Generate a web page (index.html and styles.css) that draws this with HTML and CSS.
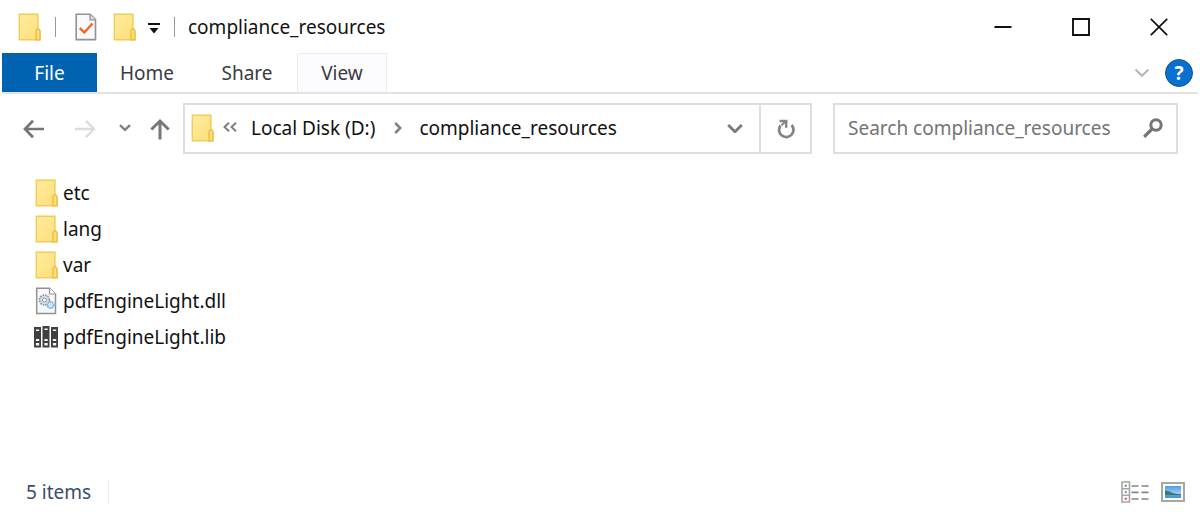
FILE: index.html
```html
<!DOCTYPE html>
<html lang="en">
<head>
<meta charset="utf-8">
<meta name="viewport" content="width=device-width, initial-scale=1">
<title>compliance_resources</title>
<link rel="stylesheet" href="styles.css">
</head>
<body>
<svg class="defs" aria-hidden="true">
  <defs>
    <linearGradient id="fold" x1="0" y1="0" x2="1" y2="1"><stop offset="0" stop-color="#ffec9f"/><stop offset="1" stop-color="#fddd78"/></linearGradient>
    <linearGradient id="sky" x1="0" y1="0" x2="0" y2="1"><stop offset="0" stop-color="#4f9be6"/><stop offset="1" stop-color="#d5ecfa"/></linearGradient>
    <symbol id="folder" viewBox="0 0 24 28">
      <path d="M2.3 1.2H21V16.2L23 18.5V26.8H2.3Z" fill="url(#fold)" stroke="#f0cd57" stroke-width="1.4"/>
      <path d="M19 26.8V17.5Q21 14 23 17.5V26.8Z" fill="#fbdc75" stroke="#e7bf46" stroke-width="1.3"/>
    </symbol>
  </defs>
</svg>
<div class="window">
  <header class="titlebar">
    <svg class="folder" aria-hidden="true"><use href="#folder"/></svg>
    <span class="rule"></span>
    <button class="quick" aria-label="Properties">
      <svg width="22" height="28" viewBox="0 0 22 28"><path d="M1.2 1.2H15.2L20.5 6.5V26.6H1.2Z" fill="#f8f9fb" stroke="#929292" stroke-width="1.6"/><path d="M15 1.2V6.8H20.5" fill="#ddd" stroke="#929292" stroke-width="1.3"/><path d="M4.8 15.2L9.3 19.5L17.5 10.5" fill="none" stroke="#f4662b" stroke-width="2.5"/></svg>
    </button>
    <button class="quick" aria-label="New folder"><svg class="folder"><use href="#folder"/></svg></button>
    <button class="quick more" aria-label="Customize toolbar">
      <svg width="12" height="12" viewBox="0 0 12 12"><path d="M0 1H12" stroke="#111" stroke-width="2"/><path d="M1.5 5H10.5L6 10.5Z" fill="#111"/></svg>
    </button>
    <span class="rule"></span>
    <h1 class="title">compliance_resources</h1>
    <div class="controls">
      <button class="control" aria-label="Minimize"><svg width="18" height="18" viewBox="0 0 18 18"><path d="M0.5 9H17.5" stroke="#111" stroke-width="2"/></svg></button>
      <button class="control" aria-label="Maximize"><svg width="18" height="18" viewBox="0 0 18 18"><path d="M1 1H17V17H1Z" fill="none" stroke="#111" stroke-width="1.9"/></svg></button>
      <button class="control" aria-label="Close"><svg width="18" height="18" viewBox="0 0 18 18"><path d="M0.8 0.8L17.2 17.2M17.2 0.8L0.8 17.2" stroke="#111" stroke-width="1.7"/></svg></button>
    </div>
  </header>

  <nav class="ribbon">
    <button class="tab file">File</button>
    <button class="tab">Home</button>
    <button class="tab">Share</button>
    <button class="tab hover">View</button>
    <button class="expand" aria-label="Expand the ribbon"><svg width="16" height="10" viewBox="0 0 16 10"><path d="M1.5 1.5L8 7.8L14.5 1.5" fill="none" stroke="#b5b5b5" stroke-width="2"/></svg></button>
    <button class="help" aria-label="Help">?</button>
  </nav>

  <div class="navbar">
    <div class="arrows">
      <button class="arrow" aria-label="Back"><svg width="22" height="20" viewBox="0 0 22 20"><path d="M22 10H3M11 1.8L3 10L11 18.2" fill="none" stroke="#757575" stroke-width="2.7"/></svg></button>
      <button class="arrow forward" aria-label="Forward" disabled><svg width="22" height="20" viewBox="0 0 22 20"><path d="M1 10H20M12 1.8L20 10L12 18.2" fill="none" stroke="#dcdcdc" stroke-width="2.4"/></svg></button>
      <button class="arrow recent" aria-label="Recent locations"><svg width="12" height="10" viewBox="0 0 12 10"><path d="M1 1.2L6 5.8L11 1.2" fill="none" stroke="#808080" stroke-width="2.5"/></svg></button>
      <button class="arrow" aria-label="Up"><svg width="20" height="22" viewBox="0 0 20 22"><path d="M10 21.5V3.5M1.3 11.5L10 3L18.7 11.5" fill="none" stroke="#777" stroke-width="3"/></svg></button>
    </div>
    <div class="address">
      <svg class="folder" aria-hidden="true"><use href="#folder"/></svg>
      <button class="overflow" aria-label="Parent folders"><svg width="14" height="12" viewBox="0 0 14 12"><path d="M6 0.8L1.5 5L6 9.2M13 0.8L8.5 5L13 9.2" fill="none" stroke="#7c7c7c" stroke-width="1.9"/></svg></button>
      <button class="crumb">Local Disk (D:)</button>
      <svg class="next" width="8" height="12" viewBox="0 0 8 12" aria-hidden="true"><path d="M1.2 1L6.2 6L1.2 11" fill="none" stroke="#808080" stroke-width="2.5"/></svg>
      <button class="crumb">compliance_resources</button>
      <button class="history" aria-label="Previous locations"><svg width="16" height="11" viewBox="0 0 16 11"><path d="M1.2 3L8 9.7L14.8 3" fill="none" stroke="#7c7c7c" stroke-width="3"/></svg></button>
      <button class="refresh" aria-label="Refresh"><svg width="18" height="20" viewBox="0 0 18 20"><path d="M14.6 6A7.2 7.2 0 1 1 3.6 6.4" fill="none" stroke="#858585" stroke-width="2.8"/><path d="M2.5 2H9.2V8.7" fill="none" stroke="#858585" stroke-width="2.5"/><path d="M4.5 6.3L9 2" stroke="#858585" stroke-width="2"/></svg></button>
    </div>
    <label class="search">
      <input type="search" placeholder="Search compliance_resources" aria-label="Search compliance_resources">
      <svg width="20" height="20" viewBox="0 0 20 20" aria-hidden="true"><circle cx="13" cy="7" r="5.2" fill="none" stroke="#757575" stroke-width="3"/><path d="M9 11L1.2 18.8" stroke="#757575" stroke-width="3.2"/></svg>
    </label>
  </div>

  <main class="content">
    <ul class="files">
      <li class="item"><svg class="folder" aria-hidden="true"><use href="#folder"/></svg>etc</li>
      <li class="item"><svg class="folder" aria-hidden="true"><use href="#folder"/></svg>lang</li>
      <li class="item"><svg class="folder" aria-hidden="true"><use href="#folder"/></svg>var</li>
      <li class="item">
        <svg width="24" height="28" viewBox="0 0 24 28" aria-hidden="true"><path d="M2.7 1.2H15.5L21.5 7V26.6H2.7Z" fill="#f8f8f8" stroke="#939393" stroke-width="1.5"/><path d="M15.5 1.2V7H21.5" fill="#fff" stroke="#939393" stroke-width="1.2"/><circle cx="10.5" cy="13" r="5" fill="#d7e0e6" stroke="#8a969c" stroke-width="1.7" stroke-dasharray="1.6 1"/><circle cx="10.5" cy="13" r="2" fill="#f8f8f8" stroke="#8a969c"/><circle cx="16.5" cy="18" r="3.2" fill="#cde8fa" stroke="#7db5dc" stroke-width="1.7" stroke-dasharray="1.7 .6"/></svg>pdfEngineLight.dll</li>
      <li class="item">
        <svg width="24" height="22" viewBox="0 0 25.4 22" preserveAspectRatio="none" aria-hidden="true"><path d="M0 1H7.4V21.5H0ZM9 0H16.4V21.5H9ZM18 1H25.4V21.5H18Z" fill="#3f3f3f"/><path d="M2 3.5H5.5V5H2ZM11 2.5H14.5V4H11ZM20 3.5H23.5V5H20ZM2 13H5.5V15H2ZM11 13H14.5V15H11ZM20 13H23.5V15H20ZM2 17H5.5V19.5H2ZM11 17H14.5V19.5H11ZM20 17H23.5V19.5H20Z" fill="#f4f4f4"/></svg>pdfEngineLight.lib</li>
    </ul>
  </main>

  <footer class="status">
    <span class="count">5 items</span>
    <button class="view" aria-label="Details"><svg width="28" height="22" viewBox="0 0 28 22"><path d="M1 1H8.5V21H1ZM1 7.7H8.5M1 14.3H8.5" fill="#fff" stroke="#a6a6a6" stroke-width="1.6"/><path d="M3.7 3.7H5.8V5.6H3.7Z" fill="#5d9273"/><path d="M3.7 10.2H5.8V12.1H3.7Z" fill="#509ee8"/><path d="M3.7 16.8H5.8V18.7H3.7Z" fill="#e04444"/><path d="M10.5 5H17.5M20.5 5H27.5M10.5 11.3H17.5M20.5 11.3H27.5M10.5 18H17.5M20.5 18H27.5" stroke="#858585" stroke-width="1.7"/></svg></button>
    <button class="view" aria-label="Large icons"><svg width="24" height="20" viewBox="0 0 24 20"><path d="M1 1H23V19H1Z" fill="#fff" stroke="#a6a6a6" stroke-width="2"/><path d="M4 4H20V16H4Z" fill="url(#sky)"/><path d="M4 8.5C8 8 10 12 20 12V13.5H4Z" fill="#397b72"/><path d="M4 13.2H20V16H4Z" fill="#4c9bd6"/></svg></button>
  </footer>
</div>
</body>
</html>
```
FILE: styles.css
```css
* { box-sizing: border-box; }
body {
  margin: 0;
  background: #fff;
  color: #111;
  font: 19px/24px "Noto Sans", "Open Sans", sans-serif;
}
button, input { font: inherit; color: inherit; }
button {
  display: flex;
  align-items: center;
  justify-content: center;
  padding: 0;
  border: 0;
  background: none;
}
svg { display: block; flex: none; }
.defs { position: absolute; width: 0; height: 0; }
.folder { width: 24px; height: 28px; }
.window {
  display: flex;
  flex-direction: column;
  min-height: 100vh;
  padding: 0 2px;
}

.titlebar { display: flex; align-items: center; height: 53px; padding-left: 15px; }
.rule { width: 1px; height: 20px; margin-left: 14px; background: #999; }
.quick { margin-left: 15px; }
.rule + .quick { margin-left: 19px; }
.more { margin: 4px 0 0 12px; }
.title { margin: 0 0 0 13px; font-size: inherit; font-weight: 400; }
.controls { display: flex; align-self: stretch; margin-left: auto; }
.control { width: 78px; }

.ribbon { display: flex; align-items: center; height: 41px; border-bottom: 2px solid #e4e4e6; }
.tab { align-self: stretch; width: 100px; color: #3a3a42; }
.file { width: 95px; background: #0063b1; color: #fff; }
.hover { width: 90px; border: 1px solid #ebecf0; border-bottom: 0; background: #fcfcff; }
.expand { margin-left: auto; }
.help {
  width: 28px;
  height: 28px;
  margin: 0 5px 0 15px;
  border: 1px solid #17558f;
  border-radius: 50%;
  background: #0870d0;
  color: #fff;
  font-weight: 700;
}

.navbar {
  display: grid;
  grid-template-columns: 161px minmax(0, 629fr) minmax(0, 366fr);
  height: 51px;
  margin: 9px 20px 0;
}
.arrows { display: flex; align-items: center; }
.forward { margin-left: 30px; }
.recent { margin: 0 19px 0 23px; }
.address { display: flex; align-items: center; border: 2px solid #dedede; padding: 0 0 2px 5px; }
.overflow { margin: 0 14px 0 9px; }
.next { margin: 0 17px 0 19px; }
.history { margin: 0 16px 0 auto; }
.refresh { align-self: stretch; width: 51px; margin-bottom: -2px; border-left: 2px solid #dedede; }
.search { display: flex; align-items: center; margin-left: 21px; padding: 0 13px 2px; border: 2px solid #dedede; }
.search input { flex: 1; min-width: 0; padding: 0; border: 0; outline: 0; background: none; }
.search input::placeholder { color: #747474; opacity: 1; }

.content { flex: 1; padding: 21px 32px; }
.files { margin: 0; padding: 0; list-style: none; }
.item { display: flex; align-items: center; gap: 5px; height: 36px; }

.status { display: flex; align-items: center; height: 44px; padding: 0 13px 0 24px; color: #3c4d6b; }
.count { margin-right: auto; padding-right: 17px; border-right: 1px solid #eee; }
.view { margin-left: 12px; }
```
